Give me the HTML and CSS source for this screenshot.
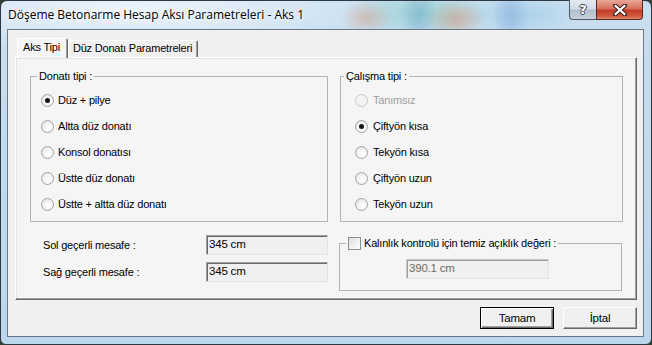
FILE: index.html
```html
<!DOCTYPE html>
<html lang="tr">
<head>
<meta charset="utf-8">
<title>Döşeme Betonarme Hesap Aksı Parametreleri - Aks 1</title>
<link rel="stylesheet" href="styles.css">
</head>
<body>
<div class="window">
  <div class="titlebar">
    <span class="title">Döşeme Betonarme Hesap Aksı Parametreleri - Aks 1</span>
    <div class="caption-btns">
      <div class="cap-btn help"><span class="help-glyph">?</span></div>
      <div class="cap-btn close">
        <svg width="14" height="12" viewBox="0 0 14 12">
          <path d="M2 1.5 L12 10.5 M12 1.5 L2 10.5" stroke="#3b2320" stroke-width="4.2" stroke-linecap="square"/>
          <path d="M2.6 2 L11.4 10 M11.4 2 L2.6 10" stroke="#ffffff" stroke-width="2.2" stroke-linecap="square"/>
        </svg>
      </div>
    </div>
  </div>
  <div class="client">
    <div class="tabs">
      <div class="tab active">Aks Tipi</div>
      <div class="tab">Düz Donatı Parametreleri</div>
    </div>
    <div class="panel">
      <div class="row-groups">
        <fieldset class="group group-donati">
          <legend class="legend-donati">Donatı tipi :</legend>
          <label class="radio-row"><span class="radio checked"></span>Düz + pilye</label>
          <label class="radio-row"><span class="radio"></span>Altta düz donatı</label>
          <label class="radio-row"><span class="radio"></span>Konsol donatısı</label>
          <label class="radio-row"><span class="radio"></span>Üstte düz donatı</label>
          <label class="radio-row"><span class="radio"></span>Üstte + altta düz donatı</label>
        </fieldset>
        <fieldset class="group group-calisma">
          <legend class="legend-calisma">Çalışma tipi :</legend>
          <label class="radio-row disabled"><span class="radio"></span>Tanımsız</label>
          <label class="radio-row"><span class="radio checked"></span>Çiftyön kısa</label>
          <label class="radio-row"><span class="radio"></span>Tekyön kısa</label>
          <label class="radio-row"><span class="radio"></span>Çiftyön uzun</label>
          <label class="radio-row"><span class="radio"></span>Tekyön uzun</label>
        </fieldset>
      </div>
      <div class="row-bottom">
        <div class="distances">
          <div class="dist-row"><span>Sol geçerli mesafe :</span><div class="textbox">345 cm</div></div>
          <div class="dist-row"><span>Sağ geçerli mesafe :</span><div class="textbox">345 cm</div></div>
        </div>
        <fieldset class="group group-check">
          <legend class="legend-check"><span class="checkbox"></span>Kalınlık kontrolü için temiz açıklık değeri :</legend>
          <div class="textbox disabled-box">390.1 cm</div>
        </fieldset>
      </div>
    </div>
    <div class="buttons">
      <div class="button default">Tamam</div>
      <div class="button">İptal</div>
    </div>
  </div>
</div>
</body>
</html>
```
FILE: styles.css
```css
* { box-sizing: border-box; }
html, body { margin: 0; padding: 0; }
body {
  width: 652px;
  height: 345px;
  overflow: hidden;
  background: #33402f;
  font-family: "Liberation Sans", Arial, sans-serif;
  font-size: 11px;
  letter-spacing: -0.2px;
  color: #000;
}
.window {
  width: 652px;
  height: 345px;
  border: 1px solid #2e3840;
  border-radius: 7px 7px 6px 6px;
  display: flex;
  flex-direction: column;
  padding: 0 7px 7px 6px;
  background:
    radial-gradient(ellipse 30px 20px at 455px 18px, rgba(214,150,120,0.55), transparent),
    radial-gradient(ellipse 26px 18px at 365px 17px, rgba(214,150,120,0.45), transparent),
    radial-gradient(ellipse 70px 26px at 420px 12px, rgba(120,200,190,0.55), transparent),
    radial-gradient(ellipse 60px 22px at 520px 14px, rgba(150,200,230,0.6), transparent),
    radial-gradient(ellipse 18px 28px at 418px 14px, rgba(70,110,200,0.35), transparent),
    radial-gradient(ellipse 18px 28px at 510px 14px, rgba(70,110,200,0.35), transparent),
    radial-gradient(ellipse 260px 40px at 130px 10px, rgba(240,246,252,0.95), transparent),
    linear-gradient(180deg, #c9dff0 0%, #c3dbee 40%, #bcd6ec 100%);
}
.titlebar {
  height: 28px;
  display: flex;
  align-items: flex-start;
}
.title {
  margin: 6px 0 0 1px;
  font-family: "Open Sans", "Noto Sans", sans-serif;
  font-size: 12px;
  letter-spacing: 0;
  line-height: 16px;
  color: #000;
  text-shadow: 0 0 6px rgba(255,255,255,0.95), 0 0 3px rgba(255,255,255,0.9);
}
.caption-btns {
  margin-left: auto;
  margin-top: -1px;
  margin-right: 1px;
  display: flex;
}
.cap-btn {
  height: 20px;
  display: flex;
  align-items: center;
  justify-content: center;
  border: 1px solid #4f5a66;
  border-top: none;
}
.help {
  width: 27px;
  border-radius: 0 0 0 4px;
  border-right: none;
  background: linear-gradient(180deg, #e4eaf1 0%, #d2dbe6 45%, #b4c0ce 55%, #c6d0dc 100%);
}
.help-glyph {
  font-family: "DejaVu Sans", sans-serif;
  font-weight: bold;
  font-size: 13px;
  line-height: 13px;
  color: #fff;
  text-shadow: -1px 0 #3c4550, 1px 0 #3c4550, 0 -1px #3c4550, 0 1px #3c4550;
}
.close {
  width: 47px;
  border-radius: 0 0 4px 0;
  border-color: #5a2620;
  background: linear-gradient(180deg, #e8a898 0%, #d8705c 45%, #c33a26 55%, #d05a40 85%, #e08a6c 100%);
}
.client {
  flex: 1;
  border: 1px solid #6b7886;
  background: #f0f0f0;
  padding: 8px 6px 0 7px;
  display: flex;
  flex-direction: column;
}
.tabs {
  display: flex;
  align-items: flex-end;
  height: 19px;
  padding-left: 2px;
}
.tab {
  height: 17px;
  line-height: 15px;
  padding: 0 5px 0 4px;
  background: #f0f0f0;
  border-top: 1px solid #fff;
  border-left: 1px solid #fff;
  border-right: 1px solid #696969;
  box-shadow: inset -1px 0 #a0a0a0;
  border-radius: 2px 2px 0 0;
  white-space: nowrap;
}
.tab.active {
  height: 20px;
  margin-bottom: -1px;
  line-height: 17px;
  padding: 0 7px 0 5px;
  position: relative;
  z-index: 1;
  background: #f5f5f5;
}
.panel {
  height: 243px;
  background: #f5f5f5;
  border-top: 1px solid #fff;
  border-left: 1px solid #fff;
  border-right: 1px solid #696969;
  border-bottom: 1px solid #696969;
  box-shadow: inset -1px -1px #a0a0a0, inset 1px 1px #e3e3e3;
  padding: 12px 0 0 14px;
  display: flex;
  flex-direction: column;
}
.row-groups {
  display: flex;
  gap: 12px;
}
.group {
  margin: 0;
  min-width: 0;
  border: 1px solid #b4b4b4;
  border-radius: 0;
  padding: 0;
}
.group legend {
  line-height: 13px;
  padding: 0 2px;
  display: flex;
  align-items: center;
  white-space: nowrap;
}
.legend-donati { margin-left: 6px; }
.legend-calisma { margin-left: 3px; }
.group-donati {
  width: 298px;
  padding: 4px 0 4px 0;
}
.group-donati .radio-row { padding-left: 10px; }
.group-calisma {
  width: 283px;
  padding: 4px 0 4px 0;
}
.group-calisma .radio-row { padding-left: 14px; }
.radio-row {
  height: 26px;
  display: flex;
  align-items: center;
  white-space: nowrap;
}
.radio {
  width: 13px;
  height: 13px;
  border-radius: 50%;
  border: 1px solid #a2a4a6;
  background: radial-gradient(circle at 62% 62%, #ffffff 0%, #f6f6f6 40%, #dcdcdc 100%);
  margin-right: 4px;
  display: flex;
  align-items: center;
  justify-content: center;
}
.group-calisma .radio { margin-right: 5px; }
.radio.checked::after {
  content: "";
  width: 5px;
  height: 5px;
  border-radius: 50%;
  background: #151515;
}
.radio-row.disabled { color: #a0a0a0; }
.radio-row.disabled .radio { border-color: #c8c8c8; background: #f4f4f4; }
.row-bottom {
  margin-top: 13px;
  display: flex;
  align-items: flex-start;
  gap: 11px;
}
.distances {
  width: 298px;
  padding-left: 13px;
  display: flex;
  flex-direction: column;
  gap: 7px;
}
.dist-row {
  display: flex;
  align-items: center;
  justify-content: space-between;
  height: 20px;
}
.textbox {
  width: 122px;
  height: 20px;
  line-height: 17px;
  padding-left: 2px;
  background: #f0f0f0;
  border-top: 1px solid #a0a0a0;
  border-left: 1px solid #a0a0a0;
  border-right: 1px solid #e3e3e3;
  border-bottom: 1px solid #e3e3e3;
  box-shadow: inset 1px 1px #696969;
  font-size: 11.5px;
}
.group-check {
  width: 283px;
  height: 54px;
  margin-top: 2px;
  padding: 9px 0 0 0;
}
.legend-check { margin-left: 6px; }
.checkbox {
  width: 13px;
  height: 13px;
  border: 1px solid #8f8f8f;
  background: linear-gradient(135deg, #dcdcdc 0%, #f7f7f7 70%, #ffffff 100%);
  margin-right: 3px;
}
.disabled-box {
  width: 143px;
  margin-left: 66px;
  color: #6d6d6d;
  border-top-color: #c8c8c8;
  border-left-color: #c8c8c8;
  box-shadow: inset 1px 1px #a0a0a0;
}
.buttons {
  margin-top: 7px;
  display: flex;
  justify-content: flex-end;
  gap: 9px;
}
.button {
  width: 74px;
  height: 22px;
  display: flex;
  align-items: center;
  justify-content: center;
  background: #f0f0f0;
  border-top: 1px solid #fff;
  border-left: 1px solid #fff;
  border-right: 1px solid #696969;
  border-bottom: 1px solid #696969;
  box-shadow: inset -1px -1px #a0a0a0;
  font-size: 11.5px;
}
.button.default {
  border: 1px solid #000;
  box-shadow: inset 1px 1px #fff, inset -1px -1px #696969, inset -2px -2px #a0a0a0;
}
```
